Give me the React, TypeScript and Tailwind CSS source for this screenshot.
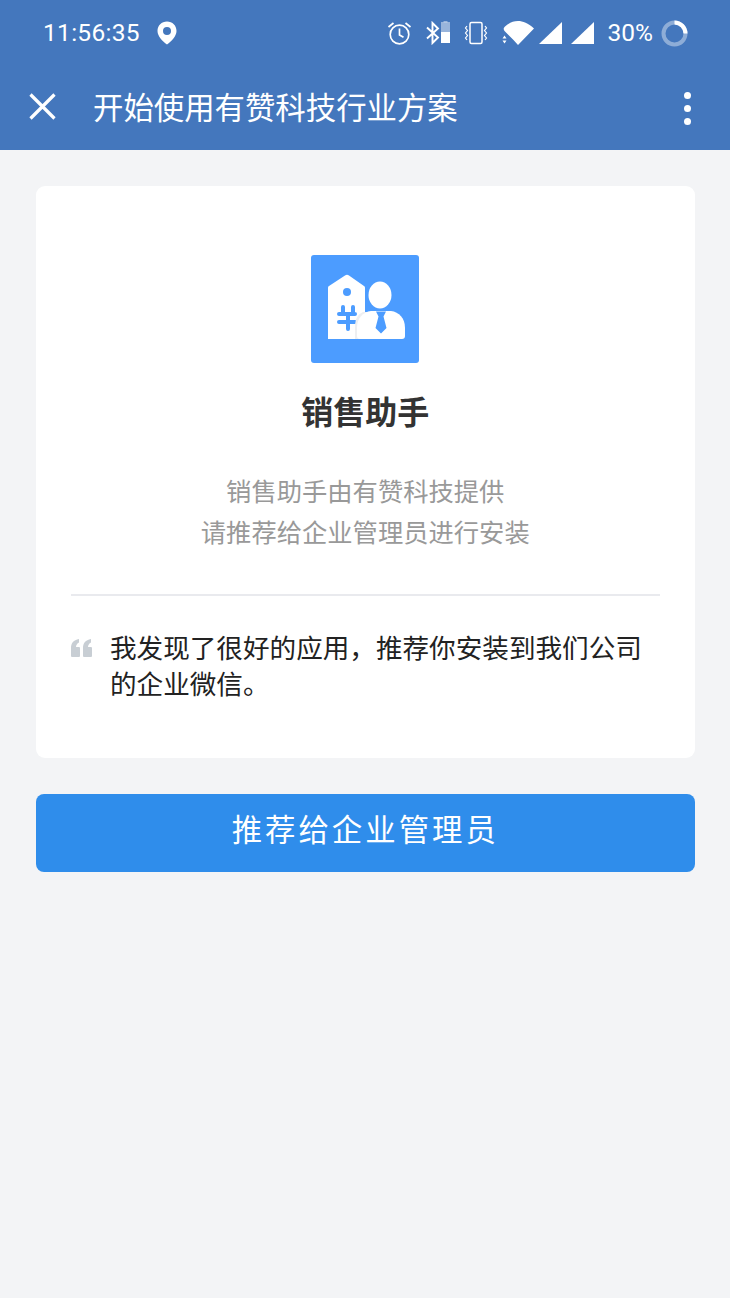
const cjk = 'font-["Roboto","Noto_Sans_CJK_SC",sans-serif]';

function StatusBar() {
  return (
    <div className="flex h-[66px] items-center pl-[43px] pr-[42px] text-white">
      <span className="text-[24.5px] tracking-[0.3px] leading-none">11:56:35</span>
      <svg className="ml-[17px]" width="20" height="24" viewBox="0 0 20 24">
        <path fill="#fff" fillRule="evenodd" d="M10 0.5C4.6 0.5 0.5 4.6 0.5 10c0 5 5 10.500 9.500 13.500C14.500 20.500 19.500 15 19.500 10 19.500 4.600 15.400 0.500 10 0.500zM10 6a4 4 0 1 1 0 8 4 4 0 0 1 0-8z" />
      </svg>
      <div className="ml-auto flex items-center">
        <svg width="25" height="24" viewBox="0 0 25 24" fill="none" stroke="#fff" strokeWidth="1.700">
          <circle cx="12.500" cy="13.500" r="9.300" />
          <path d="M12.500 7.500v6.500l4 2.300M1.500 6l5-4M23.500 6l-5-4" />
        </svg>
        <svg className="ml-[14px]" width="24" height="24" viewBox="0 0 24 24">
          <path fill="none" stroke="#fff" strokeWidth="1.900" d="M1 6.500l11 10-5.500 5.500V2l5.500 5.500-11 10" />
          <rect x="15" y="1" width="9" height="10" fill="#fff" fillOpacity="0.45" />
          <rect x="15" y="11" width="9" height="11" fill="#fff" />
          <rect x="17.500" y="0" width="4" height="1.500" fill="#fff" fillOpacity="0.45" />
        </svg>
        <svg className="ml-[14px]" width="24" height="24" viewBox="0 0 24 24" fill="none" stroke="#fff" strokeWidth="1.500">
          <rect x="6" y="1.500" width="12" height="21" rx="1.500" />
          <path d="M3 5l-1.500 2 2 2.500-2 2.500 2 2.500-2 2.500L3 19M21 5l1.500 2-2 2.500 2 2.500-2 2.500 2 2.500L21 19" strokeWidth="1.200" />
        </svg>
        <svg className="ml-[13px]" width="33" height="26" viewBox="0 0 33 26" fill="#fff">
          <path d="M4 6.500C8 3 12 1 17 1s10 2 16 7.500L17 25 12.500 20 4 11.500C2.500 10 2 8.500 4 6.500z" />
          <path d="M1.500 18.500L3.500 15.500 5.500 18.500zM1.500 20.500H5.500L3.500 23.500z" />
        </svg>
        <svg className="ml-[4px]" width="24" height="24" viewBox="0 0 24 24" fill="#fff">
          <path d="M24 1v22H1z" />
        </svg>
        <svg className="ml-[8px]" width="24" height="24" viewBox="0 0 24 24" fill="#fff">
          <path d="M24 1v22H1z" />
        </svg>
        <span className="ml-[14px] text-[24.5px] leading-none">30%</span>
        <svg className="ml-[8px]" width="27" height="27" viewBox="0 0 27 27" fill="none" strokeWidth="4">
          <circle cx="13.500" cy="13.500" r="11" stroke="#fff" strokeOpacity="0.4" />
          <path d="M13.500 2.500A11 11 0 0 1 24.500 13.500" stroke="#fff" />
        </svg>
      </div>
    </div>
  );
}

function AppBar() {
  return (
    <div className="flex h-[84px] items-center pb-[3px] pl-[29px] pr-[39px]">
      <svg width="27" height="27" viewBox="0 0 27 27" fill="none" stroke="#fff" strokeWidth="3.200">
        <path d="M1.500 1.500l24 24M25.500 1.500l-24 24" />
      </svg>
      <span className="ml-[37px] pt-[5px] text-[30.4px] leading-none text-white">开始使用有赞科技行业方案</span>
      <div className="ml-auto mt-[3px] flex flex-col gap-[6px]">
        <span className="h-[7px] w-[7px] rounded-full bg-white" />
        <span className="h-[7px] w-[7px] rounded-full bg-white" />
        <span className="h-[7px] w-[7px] rounded-full bg-white" />
      </div>
    </div>
  );
}

function AppIcon() {
  return (
    <svg width="108" height="108" viewBox="0 0 108 108">
      <rect width="108" height="108" rx="3" fill="#4c9cff" />
      {/* price tag */}
      <path fill="#fff" d="M17 33a2 2 0 0 1 1-2l16-10.500a3.500 3.500 0 0 1 4 0L53 31a2 2 0 0 1 1 2v51H17z" />
      <circle cx="36" cy="37" r="4" fill="#4c9cff" />
      <path fill="none" stroke="#4c9cff" strokeWidth="4" strokeLinecap="round" d="M32 52v7M42 52v7M28 59h16M28 67h16M37 59v15" />
      {/* person */}
      <path fill="#eeeff1" d="M44 84V72c0-8 3-13 8-15h6v27z" />
      <path fill="#fff" d="M49 84c-2 0-3-1-3-3V73c0-10 6-16 14-17h20c8 1 14 7 14 17v8c0 2-1 3-3 3z" />
      <ellipse cx="69" cy="40" rx="11.500" ry="13.500" fill="#fff" />
      <path fill="#4c9cff" d="M65 56.500h10l-2.500 5 3 11.500-5.500 5.500-5.500-5.500 3-11.500z" />
    </svg>
  );
}

export default function App() {
  return (
    <div className={`flex min-h-[1298px] flex-col bg-[#f3f4f6] ${cjk}`}>
      <div className="bg-[#4477bd]">
        <StatusBar />
        <AppBar />
      </div>
      <main className="flex flex-col gap-[36px] pl-[35.5px] pr-[35px] pt-[35.7px]">
        <section className="flex h-[572.6px] flex-col rounded-[9px] bg-white px-[35.5px] pt-[69.3px]">
          <div className="flex justify-center">
            <AppIcon />
          </div>
          <h1 className="mt-[31px] text-center text-[32px] font-bold leading-[38px] text-[#333]">销售助手</h1>
          <p className="mt-[40px] text-center text-[25.3px] leading-[41px] text-[#999]">
            销售助手由有赞科技提供
            <br />
            请推荐给企业管理员进行安装
          </p>
          <div className="mt-[40px] border-t-2 border-[#e9eaee]" />
          <div className="mt-[35px] flex">
            <svg className="mt-[8px] shrink-0" width="21" height="18" viewBox="0 0 21 18" fill="#c8ced4">
              <path d="M1 18a1 1 0 0 1-1-1V9C0 4 2.500 1 8 0v3.500C6 4.500 5.200 6 5 8h3a1 1 0 0 1 1 1v8a1 1 0 0 1-1 1zM13 18a1 1 0 0 1-1-1V9c0-5 2.500-8 8-9v3.500C18 4.500 17.200 6 17 8h3a1 1 0 0 1 1 1v8a1 1 0 0 1-1 1z" />
            </svg>
            <p className="ml-[18px] text-[26.6px] leading-[36px] text-[#222]">
              我发现了很好的应用，推荐你安装到我们公司的企业微信。
            </p>
          </div>
        </section>
        <button className="h-[77.7px] rounded-[8px] bg-[#2f8deb] pb-[4px] text-[30.4px] tracking-[3px] text-white">
          推荐给企业管理员
        </button>
      </main>
    </div>
  );
}
